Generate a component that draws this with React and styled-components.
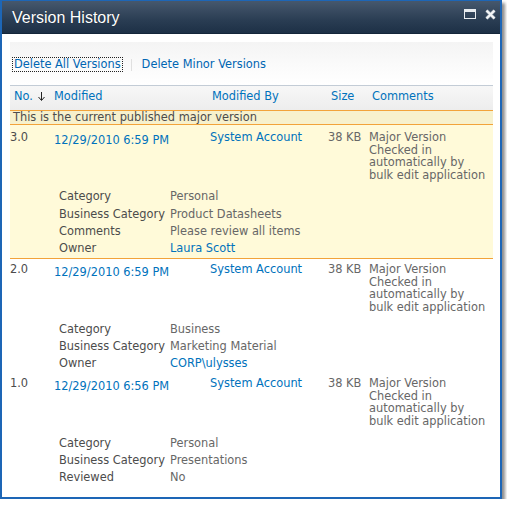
import React from "react";
import styled, { createGlobalStyle } from "styled-components";

const Global = createGlobalStyle`
  html, body { margin: 0; padding: 0; background: #ffffff; }
  body { font-family: "DejaVu Sans", Verdana, sans-serif; }
`;

const FS = "11.4px";

const Window = styled.div`
  width: 502px;
  height: 499px;
  box-sizing: border-box;
  border: 2px solid #1d66b6;
  border-top-width: 1px;
  background: #ffffff;
  box-shadow: 3px 3px 3px rgba(0, 0, 0, 0.45);
  display: flex;
  flex-direction: column;
  overflow: hidden;
`;

const TitleBar = styled.div`
  height: 32px;
  flex: none;
  background: linear-gradient(#46586d, #2a3d53 60%, #1d3046);
  display: flex;
  align-items: center;
  padding: 0 0 0 10px;
  border-bottom: 1px solid #14263a;
`;

const Title = styled.div`
  flex: 1;
  color: #ffffff;
  font-family: "Liberation Sans", Arial, sans-serif;
  font-size: 16px;
  padding-top: 1px;
  text-shadow: 0 0 1px rgba(0, 0, 0, 0.5);
`;

const TitleButtons = styled.div`
  display: flex;
  gap: 9px;
  align-items: center;
  padding-right: 4px;
  margin-top: -6px;
`;

const Body = styled.div`
  padding: 8px 7px 0 8px;
  flex: 1;
`;

const Toolbar = styled.div`
  height: 44px;
  background: linear-gradient(#f4f4f4, #fbfbfb 60%, #ffffff);
  border-bottom: 1px solid #c3ccd6;
  display: flex;
  align-items: center;
  padding: 2px 0 0 3px;
  box-sizing: border-box;
  font-size: ${FS};
`;

const ToolLink = styled.span`
  color: #0066b3;
  padding: 0 1px;
  outline: ${(p) => (p.$focus ? "1px dotted #222" : "none")};
  outline-offset: 0;
  line-height: 13px;
`;

const Sep = styled.span`
  width: 1px;
  height: 12px;
  background: #e0e0e0;
  margin: 0 9px 0 9px;
`;

const Grid = styled.div`
  display: grid;
  grid-template-columns: 44px 156px 118px 41px 1fr;
`;

const Header = styled(Grid)`
  height: 24px;
  align-items: center;
  background: linear-gradient(#f7f7f7, #ededed);
  font-size: ${FS};
  color: #0072bc;
  padding-bottom: 4px;
  box-sizing: border-box;
`;

const HeadCell = styled.div`
  padding-left: ${(p) => p.$pl || 0}px;
  display: flex;
  align-items: center;
  gap: 5px;
`;

const Band = styled.div`
  background: #f7f1cd;
  border-top: 1px solid #f2a33a;
  border-bottom: 1px solid #f2a33a;
  height: 13px;
  line-height: 13px;
  padding-left: 3px;
  font-size: ${FS};
  color: #4c4c4c;
`;

const Version = styled.div`
  background: ${(p) => (p.$current ? "#fffad9" : "#ffffff")};
  border-bottom: ${(p) => (p.$current ? "1px solid #f2a33a" : "none")};
  padding: ${(p) => (p.$current ? "6px 0 1px" : "4px 0 1px")};
  font-size: ${FS};
`;

const Cell = styled.div`
  line-height: 12.6px;
  color: ${(p) => (p.$link ? "#0072bc" : p.$muted ? "#676767" : "#4c4c4c")};
  padding-top: ${(p) => p.$pt || 0}px;
`;

const Props = styled.div`
  display: grid;
  grid-template-columns: 111px 1fr;
  margin: 7px 0 0 49px;
  line-height: 17.2px;
`;

const PropLabel = styled.div`
  color: #4c4c4c;
`;

const PropValue = styled.div`
  color: ${(p) => (p.$link ? "#0072bc" : "#676767")};
`;

const versions = [
  {
    no: "3.0",
    date: "12/29/2010 6:59 PM",
    current: true,
    props: [
      ["Category", "Personal"],
      ["Business Category", "Product Datasheets"],
      ["Comments", "Please review all items"],
      ["Owner", "Laura Scott", true],
    ],
  },
  {
    no: "2.0",
    date: "12/29/2010 6:59 PM",
    props: [
      ["Category", "Business"],
      ["Business Category", "Marketing Material"],
      ["Owner", "CORP\\ulysses", true],
    ],
  },
  {
    no: "1.0",
    date: "12/29/2010 6:56 PM",
    props: [
      ["Category", "Personal"],
      ["Business Category", "Presentations"],
      ["Reviewed", "No"],
    ],
  },
];

const MaxIcon = () => (
  <svg width="12" height="10" viewBox="0 0 12 10">
    <rect x="0.5" y="0.5" width="11" height="9" fill="none" stroke="#e8ecf0" />
    <rect x="1" y="1" width="10" height="2" fill="#e8ecf0" />
  </svg>
);

const CloseIcon = () => (
  <svg width="11" height="11" viewBox="0 0 11 11">
    <path d="M1.5 1.5 L9.5 9.5 M9.5 1.5 L1.5 9.5" stroke="#8a96a3" strokeWidth="3.4" />
    <path d="M1.5 1.5 L9.5 9.5 M9.5 1.5 L1.5 9.5" stroke="#f4f6f8" strokeWidth="2.2" />
  </svg>
);

const SortArrow = () => (
  <svg width="7" height="9" viewBox="0 0 7 9">
    <path d="M3.5 0 V8" stroke="#222" strokeWidth="1" />
    <path d="M0.5 5 L3.5 8.5 L6.5 5" fill="none" stroke="#222" strokeWidth="1" />
  </svg>
);

export default function App() {
  return (
    <>
      <Global />
      <Window>
        <TitleBar>
          <Title>Version History</Title>
          <TitleButtons>
            <MaxIcon />
            <CloseIcon />
          </TitleButtons>
        </TitleBar>
        <Body>
          <Toolbar>
            <ToolLink $focus>Delete All Versions</ToolLink>
            <Sep />
            <ToolLink>Delete Minor Versions</ToolLink>
          </Toolbar>
          <Header>
            <HeadCell $pl={4}>
              No. <SortArrow />
            </HeadCell>
            <HeadCell>Modified</HeadCell>
            <HeadCell $pl={2}>Modified By</HeadCell>
            <HeadCell $pl={3}>Size</HeadCell>
            <HeadCell $pl={3}>Comments</HeadCell>
          </Header>
          <Band>This is the current published major version</Band>
          {versions.map((v) => (
            <Version key={v.no} $current={v.current}>
              <Grid>
                <Cell>{v.no}</Cell>
                <Cell $link $pt={3}>
                  {v.date}
                </Cell>
                <Cell $link>System Account</Cell>
                <Cell $muted>38 KB</Cell>
                <Cell $muted>
                  Major Version
                  <br />
                  Checked in
                  <br />
                  automatically by
                  <br />
                  bulk edit application
                </Cell>
              </Grid>
              <Props>
                {v.props.map(([l, val, link]) => (
                  <React.Fragment key={l}>
                    <PropLabel>{l}</PropLabel>
                    <PropValue $link={link}>{val}</PropValue>
                  </React.Fragment>
                ))}
              </Props>
            </Version>
          ))}
        </Body>
      </Window>
    </>
  );
}
